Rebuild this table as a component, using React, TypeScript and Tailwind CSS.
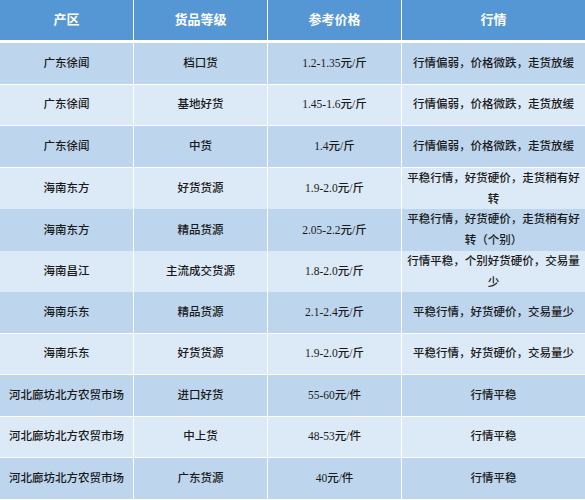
const rows = [
  ["广东徐闻", "档口货", "1.2-1.35元/斤", "行情偏弱，价格微跌，走货放缓"],
  ["广东徐闻", "基地好货", "1.45-1.6元/斤", "行情偏弱，价格微跌，走货放缓"],
  ["广东徐闻", "中货", "1.4元/斤", "行情偏弱，价格微跌，走货放缓"],
  ["海南东方", "好货货源", "1.9-2.0元/斤", "平稳行情，好货硬价，走货稍有好转"],
  ["海南东方", "精品货源", "2.05-2.2元/斤", "平稳行情，好货硬价，走货稍有好转（个别）"],
  ["海南昌江", "主流成交货源", "1.8-2.0元/斤", "行情平稳，个别好货硬价，交易量少"],
  ["海南乐东", "精品货源", "2.1-2.4元/斤", "平稳行情，好货硬价，交易量少"],
  ["海南乐东", "好货货源", "1.9-2.0元/斤", "平稳行情，好货硬价，交易量少"],
  ["河北廊坊北方农贸市场", "进口好货", "55-60元/件", "行情平稳"],
  ["河北廊坊北方农贸市场", "中上货", "48-53元/件", "行情平稳"],
  ["河北廊坊北方农贸市场", "广东货源", "40元/件", "行情平稳"],
];

const headers = ["产区", "货品等级", "参考价格", "行情"];

export default function App() {
  return (
    <div
      className="w-[585px] h-[500px] bg-white overflow-hidden"
      style={{ fontFamily: '"Liberation Serif", "Noto Sans CJK SC", serif' }}
    >
      {/* Header */}
      <div className="grid grid-cols-[133px_133px_133px_1fr] gap-x-[1px] h-[40px] mb-[3px]">
        {headers.map((h) => (
          <div
            key={h}
            className="bg-[#5596d5] text-white text-[13px] font-bold flex items-center justify-center"
          >
            {h}
          </div>
        ))}
      </div>

      {/* Body */}
      <div className="flex flex-col gap-y-[1px]">
        {rows.map((r, i) => (
          <div
            key={i}
            className="grid grid-cols-[133px_133px_133px_1fr] gap-x-[1px] h-[40.5px]"
          >
            {r.map((c, j) => (
              <div
                key={j}
                className={`${
                  i % 2 === 0 ? "bg-[#bdd6ee]" : "bg-[#dce9f6]"
                } text-[#1a1a1a] text-[11.5px] font-medium leading-[21px] flex items-center justify-center text-center px-[3px]`}
              >
                {c}
              </div>
            ))}
          </div>
        ))}
      </div>
    </div>
  );
}
